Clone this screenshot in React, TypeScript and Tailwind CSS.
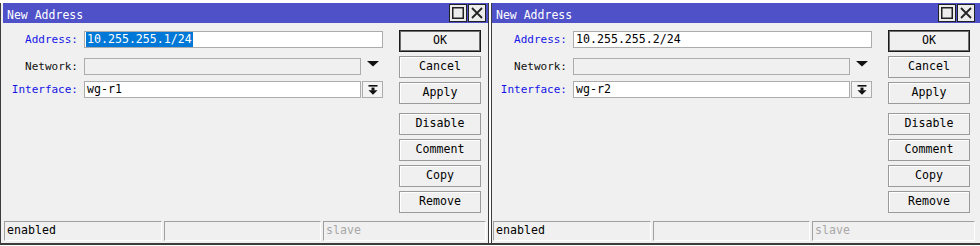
import React from 'react';

const mono = "font-['DejaVu_Sans_Mono',monospace]";

type WinProps = {
  first?: boolean;
  address: string;
  iface: string;
  selected?: boolean;
};

function Label({ text, blue }: { text: string; blue?: boolean }) {
  return (
    <div className={`w-[75px] text-right text-[11px] leading-[17px] ${blue ? 'text-[#1414e6]' : 'text-[#111]'}`}>
      {text}
    </div>
  );
}

function Btn({ label, primary, className = '' }: { label: string; primary?: boolean; className?: string }) {
  return (
    <div
      className={`h-[22px] w-[82px] flex items-center justify-center text-[11.6px] text-black bg-[#f0f0f0] border ${
        primary ? 'border-[#1a1a1a] shadow-[inset_0_0_0_1px_#6e6e6e]' : 'border-[#9a9a9a] shadow-[inset_1px_1px_0_#ffffff]'
      } ${className}`}
    >
      {label}
    </div>
  );
}

function Window({ first, address, iface, selected }: WinProps) {
  return (
    <div className={`flex flex-col h-[246px] shrink-0 ${first ? 'w-[489px]' : 'flex-1'}`}>
      <div className="h-[3px] bg-white" />
      <div className="flex flex-1">
        {/* left frame */}
        {first ? (
          <div className="w-[3px] flex">
            <div className="w-px bg-[#3c3c3c]" />
            <div className="w-[2px] bg-[#f0f0f0]" />
          </div>
        ) : (
          <div className="w-[3px] flex">
            <div className="w-[2px] bg-white" />
            <div className="w-px bg-[#3c3c3c]" />
          </div>
        )}

        <div className="flex-1 flex flex-col">
          {/* title bar */}
          <div className="h-[20px] bg-[#4f51c9]">
            <div className="w-[485px] h-full flex justify-between pl-[4px] pr-[2px]">
              <div className="pt-[5px] leading-[14px] text-[11.5px] text-white">New Address</div>
              <div className="flex gap-[1px] pt-[1px]">
                <div className="w-[18px] h-[18px] bg-[#ececec] border border-[#222] flex items-center justify-center">
                  <svg width="12" height="12" viewBox="0 0 12 12">
                    <rect x="0.75" y="0.75" width="10.5" height="10.5" fill="none" stroke="#222" strokeWidth="1.5" />
                  </svg>
                </div>
                <div className="w-[18px] h-[18px] bg-[#ececec] border border-[#222] flex items-center justify-center">
                  <svg width="12" height="12" viewBox="0 0 12 12">
                    <path d="M1 1 L11 11 M11 1 L1 11" stroke="#222" strokeWidth="1.8" />
                  </svg>
                </div>
              </div>
            </div>
          </div>

          {/* body */}
          <div className="flex-1 bg-[#f0f0f0] flex flex-col">
            <div className="w-[485px] flex">
              <div className="w-[380px] pt-[8px] flex flex-col">
                <div className="flex items-center gap-[6px] h-[17px]">
                  <Label text="Address:" blue />
                  <div className="w-[299px] h-[17px] bg-white border border-[#acacac] pl-[1px] flex items-stretch text-[11.6px]">
                    <span className={`pl-[1px] pr-[1px] flex items-center ${selected ? 'bg-[#0078d7] text-white' : 'text-black'}`}>
                      {address}
                    </span>
                  </div>
                </div>
                <div className="flex items-center gap-[6px] h-[17px] mt-[10px]">
                  <Label text="Network:" />
                  <div className="w-[277px] h-[17px] bg-[#f0f0f0] border border-[#acacac]" />
                  <svg className="ml-[0px] self-start mt-[3px]" width="12" height="6" viewBox="0 0 12 6">
                    <polygon points="0,0 12,0 6,5.5" fill="#111" />
                  </svg>
                </div>
                <div className="flex items-center h-[17px] mt-[6px]">
                  <Label text="Interface:" blue />
                  <div className="w-[277px] h-[17px] ml-[6px] bg-white border border-[#acacac] pl-[2px] flex items-center text-[11.6px] text-black">
                    {iface}
                  </div>
                  <div className="w-[21px] h-[17px] ml-[1px] bg-[#f4f4f4] border border-[#acacac] flex items-center justify-center">
                    <svg width="10" height="10" viewBox="0 0 10 10">
                      <rect x="0.5" y="0" width="9" height="1.6" fill="#111" />
                      <rect x="3.5" y="2.6" width="3" height="3" fill="#111" />
                      <polygon points="0.5,5.2 9.5,5.2 5,9.8" fill="#111" />
                    </svg>
                  </div>
                </div>
              </div>

              <div className="ml-[16px] pt-[7px] flex flex-col gap-[4px]">
                <Btn label="OK" primary />
                <Btn label="Cancel" />
                <Btn label="Apply" />
                <Btn label="Disable" className="mt-[5px]" />
                <Btn label="Comment" />
                <Btn label="Copy" />
                <Btn label="Remove" />
              </div>
            </div>

            {/* status bar */}
            <div className="mt-auto mb-[2px] pl-[1px] flex gap-[2px] h-[20px] text-[11.6px]">
              <div className="w-[158px] border-t border-l border-[#a0a0a0] border-b-white border-r-white border-b border-r pl-[2px] flex items-center text-black">
                enabled
              </div>
              <div className="w-[157px] border-t border-l border-[#a0a0a0] border-b-white border-r-white border-b border-r" />
              <div className="w-[163px] border-t border-l border-[#a0a0a0] border-b-white border-r-white border-b border-r pl-[2px] flex items-center text-[#a8a8a8]">
                slave
              </div>
            </div>
          </div>
        </div>

        {first && <div className="w-px bg-[#3c3c3c]" />}
      </div>
      <div className="h-[2px] bg-[#3c3c3c]" />
      <div className="h-px bg-white" />
    </div>
  );
}

export default function App() {
  return (
    <div className={`w-[980px] h-[246px] overflow-hidden flex bg-white ${mono}`}>
      <Window first address="10.255.255.1/24" iface="wg-r1" selected />
      <Window address="10.255.255.2/24" iface="wg-r2" />
    </div>
  );
}
